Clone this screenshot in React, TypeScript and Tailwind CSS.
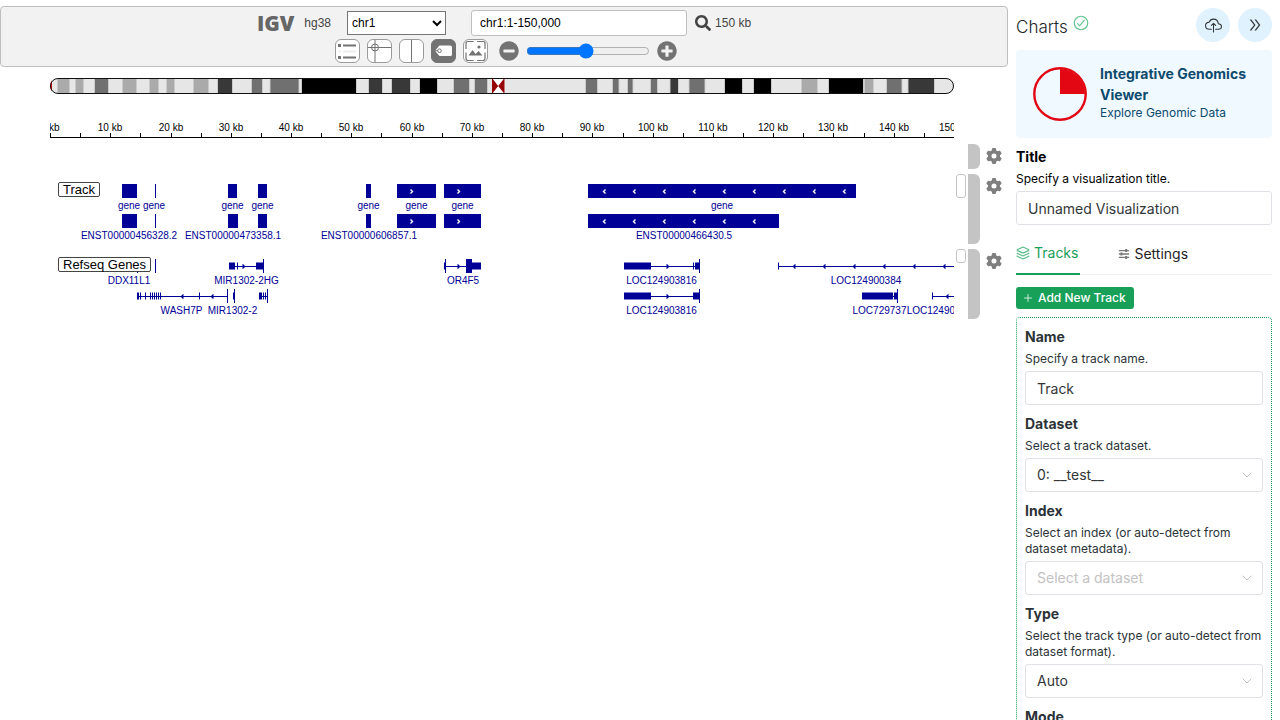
import React, { useState } from "react";
import { FaGear } from "react-icons/fa6";
import { FaSearch, FaMinusCircle, FaPlusCircle } from "react-icons/fa";
import { IoCloudUploadOutline, IoCheckmarkCircleOutline } from "react-icons/io5";
import { AiOutlineDoubleRight } from "react-icons/ai";
import { ChevronDown, Layers, Plus } from "lucide-react";

const BLUE = "#000096";
const KB = 904 / 150;

// Cytobands as [start, end, fill], in pixels from the left end of the ideogram.
const bands: [number, number, string][] = [
  [8, 19, "#aaaaaa"], [26, 33, "#aaaaaa"], [45, 58, "#707070"], [73, 86, "#aaaaaa"],
  [100, 108, "#aaaaaa"], [117, 124, "#aaaaaa"], [144, 158, "#aaaaaa"], [168, 182, "#383838"],
  [202, 212, "#707070"], [220.5, 248.5, "#707070"], [252, 306, "#000000"], [319, 332, "#383838"],
  [342, 360, "#383838"], [370, 387, "#000000"], [404, 419, "#707070"], [425, 437, "#707070"],
  [536, 547, "#707070"], [563, 568.5, "#707070"], [578, 582.5, "#707070"], [601, 607, "#707070"],
  [620.5, 628, "#383838"], [639.5, 654.5, "#707070"], [675, 692, "#000000"], [704, 721, "#000000"],
  [752, 767, "#aaaaaa"], [779, 813, "#000000"], [815, 823, "#aaaaaa"], [837, 851.5, "#707070"],
  [858.5, 884, "#383838"],
];

function Ideogram() {
  return (
    <svg className="block h-4 w-full" aria-label="Chromosome ideogram">
      <defs>
        <clipPath id="chromosome">
          <rect x="0" y="0" width="904" height="16" rx="8" />
        </clipPath>
      </defs>
      <g clipPath="url(#chromosome)">
        <rect width="904" height="16" fill="#e6e6e6" />
        {bands.map(([a, b, fill]) => (
          <g key={a}>
            <rect x={a - 0.8} width={b - a + 1.6} height="16" fill="#c4c4c4" />
            <rect x={a} width={b - a} height="16" fill={fill} />
          </g>
        ))}
        <rect x="442" width="12.5" height="16" fill="#ffffff" />
        <path d="M442 0 L448.2 8 L442 16 Z M454.5 0 L448.2 8 L454.5 16 Z" fill="#960000" />
        <rect width="2" height="16" fill="#e01010" />
      </g>
      <rect x="0.5" y="0.5" width="903" height="15" rx="7.5" fill="none" stroke="#111111" />
    </svg>
  );
}

function Ruler() {
  return (
    <svg className="block h-full w-full font-['Liberation_Sans',Arial,sans-serif] text-[10px]" shapeRendering="crispEdges" aria-label="Ruler">
      <rect x="0" y="18" width="904" height="1" />
      {Array.from({ length: 30 }, (_, i) => (
        <rect key={i} x={Math.round(i * 5 * KB)} y="14" width="1" height="5" />
      ))}
      {Array.from({ length: 16 }, (_, i) => (
        <text key={i} x={Math.round(i * 10 * KB)} y="12" textAnchor="middle">
          {i * 10} kb
        </text>
      ))}
    </svg>
  );
}

type Mark = [number, number, number];

function Arrows({ at, y, dir, color }: { at: number[]; y: number; dir: 1 | -1; color: string }) {
  return (
    <>
      {at.map((x) => (
        <path
          key={x}
          d={`M${x - dir} ${y - 2} L${x + dir} ${y} L${x - dir} ${y + 2}`}
          fill="none"
          stroke={color}
          strokeWidth="1.4"
        />
      ))}
    </>
  );
}

function Marks({ items, y, h }: { items: [number, number][]; y: number; h: number }) {
  return (
    <>
      {items.map(([a, b]) => (
        <rect key={a} x={a} y={y - h / 2} width={b - a} height={h} fill={BLUE} />
      ))}
    </>
  );
}

function Names({ items, y }: { items: [number, string][]; y: number }) {
  return (
    <>
      {items.map(([x, name]) => (
        <text key={x} x={x} y={y} textAnchor="middle" fill={BLUE}>
          {name}
        </text>
      ))}
    </>
  );
}

function range(from: number, step: number, n: number) {
  return Array.from({ length: n }, (_, i) => from + i * step);
}

function AnnotationTrack() {
  return (
    <svg className="block h-full w-full font-['Liberation_Sans',Arial,sans-serif] text-[10px]" aria-label="Track features">
      <Marks y={17} h={14} items={[[72, 87], [105, 106], [178, 187], [208, 217], [316, 321], [347, 386], [394, 431], [538, 806]]} />
      <Arrows y={17.5} dir={1} color="#fff" at={[361.5, 408.5]} />
      <Arrows y={17.5} dir={-1} color="#fff" at={range(554.5, 30, 9)} />
      <Names y={35} items={[[79, "gene"], [104, "gene"], [182.5, "gene"], [212.5, "gene"], [318.5, "gene"], [366.5, "gene"], [412.5, "gene"], [672, "gene"]]} />
      <Marks y={47} h={14} items={[[72, 87], [105, 106], [178, 188], [208, 217], [316, 321], [347, 386], [394, 431], [538, 729]]} />
      <Arrows y={47.5} dir={1} color="#fff" at={[361.5, 408.5]} />
      <Arrows y={47.5} dir={-1} color="#fff" at={range(554.5, 30, 6)} />
      <Names y={65} items={[[79, "ENST00000456328.2"], [183, "ENST00000473358.1"], [319, "ENST00000606857.1"], [634, "ENST00000466430.5"]]} />
    </svg>
  );
}

function RefseqTrack() {
  const introns: Mark[] = [
    [179, 213, 17], [395, 416, 17], [574, 649, 17], [729, 904, 17],
    [87, 177, 47], [209, 217, 47], [574, 649, 47], [812, 848, 47], [882, 904, 47],
  ];
  return (
    <svg className="block h-full w-full font-['Liberation_Sans',Arial,sans-serif] text-[10px]" aria-label="Refseq genes">
      {introns.map(([a, b, y]) => (
        <rect key={`${a}-${y}`} x={a} y={y} width={b - a} height="1" fill={BLUE} shapeRendering="crispEdges" />
      ))}
      <Marks y={17} h={14} items={[[87, 88], [105, 106], [213, 214], [395, 396], [416, 422], [649, 650]]} />
      <Marks y={17} h={7} items={[[179, 185], [187, 188], [206, 213], [394, 395], [422, 431], [574, 601], [643, 644], [645, 649], [728, 729]]} />
      <Arrows y={17.5} dir={1} color={BLUE} at={[193.5, 408.5, 617.5]} />
      <Arrows y={17.5} dir={-1} color={BLUE} at={range(744.5, 30, 6)} />
      <Names y={35} items={[[79, "DDX11L1"], [196.5, "MIR1302-2HG"], [413, "OR4F5"], [611.5, "LOC124903816"], [816, "LOC124900384"]]} />
      <Marks y={47} h={14} items={[[177, 178], [184, 185], [217, 218], [649, 650], [847, 848]]} />
      <Marks
        y={47}
        h={7}
        items={[[87, 89], [90, 91], [95, 96], [100, 101], [102, 103], [104, 105], [106, 107], [108, 109], [110, 111], [149, 150], [183, 184], [209, 212], [213, 214], [215, 216], [574, 601], [643, 649], [812, 843], [844, 847], [882, 883]]}
      />
      <Arrows y={47.5} dir={-1} color={BLUE} at={[132.5, 162.5, 897.5]} />
      <Arrows y={47.5} dir={1} color={BLUE} at={[617.5]} />
      <Names y={65} items={[[131.5, "WASH7P"], [182.5, "MIR1302-2"], [611.5, "LOC124903816"], [829.5, "LOC729737"], [892, "LOC124900385"]]} />
    </svg>
  );
}

function GearButton({ label }: { label: string }) {
  return (
    <button type="button" aria-label={label} className="mx-1.5 mt-1 h-4 w-4 shrink-0 text-[#7f7f7f]">
      <FaGear size={16} />
    </button>
  );
}

function TrackRow({ name, thumb, children }: { name: string; thumb: string; children: React.ReactNode }) {
  return (
    <section className="flex h-[70px] items-start pl-[50px]">
      <div className="relative h-full min-w-0 flex-1 overflow-hidden">
        {children}
        <span className="absolute top-2 left-2 rounded-xs border border-[#444] bg-white px-1 font-['Liberation_Sans',Arial,sans-serif] text-[13px] leading-[13px] text-black">
          {name}
        </span>
      </div>
      <div className="mx-0.5 w-2.5 shrink-0">
        <div className={`${thumb} rounded-[3px] border border-[#c4c4c4] bg-white`} />
      </div>
      <div className="h-full w-3 shrink-0 rounded-r-md bg-[#c4c4c4]" />
      <GearButton label={`${name} settings`} />
    </section>
  );
}

function ToolButton({ label, dark, children }: { label: string; dark?: boolean; children: React.ReactNode }) {
  return (
    <button
      type="button"
      aria-label={label}
      className={
        dark
          ? "h-6 w-[25px] overflow-hidden rounded-md border border-[#737373] bg-[#737373]"
          : "h-6 w-[25px] overflow-hidden rounded-md border border-[#9b9b9b] bg-white"
      }
    >
      <svg viewBox="0 0 23 22" className="block h-full w-full" fill="none" stroke="#737373">
        {children}
      </svg>
    </button>
  );
}

function Toolbar() {
  const [zoom, setZoom] = useState(48);
  return (
    <header className="mt-1.5 flex h-[61px] flex-col items-center gap-[3px] rounded-sm border border-[#bfbfbf] bg-[#f2f2f2] pt-[3px] font-['Liberation_Sans',Arial,sans-serif] text-xs text-[#444]">
      <div className="flex h-[26px] items-center">
        <span className="mr-2.5 font-['Open_Sans',sans-serif] text-[21px] leading-6 font-extrabold text-[#666]">IGV</span>
        <span className="mr-4">hg38</span>
        <select aria-label="Chromosome" defaultValue="chr1" className="mr-[25px] h-6 w-[99px] border border-[#767676] bg-white text-black">
          <option>chr1</option>
          <option>chr2</option>
        </select>
        <input
          aria-label="Locus"
          defaultValue="chr1:1-150,000"
          className="mr-2 h-[26px] w-[216px] rounded-[3px] border border-[#bfbfbf] bg-white px-2 text-black"
        />
        <button type="button" aria-label="Search" className="mr-1">
          <FaSearch size={16} />
        </button>
        <span>150 kb</span>
      </div>
      <div className="flex h-6 items-center gap-[7px] pl-1">
        <ToolButton label="Track selection">
          <path d="M7 5.5H20M7 17.5H20" strokeWidth="2" />
          <path d="M7 11.5H20M2.5 11.5H5" strokeWidth="2" stroke="#eeeeee" />
          <path d="M2 5.5H5M2 17.5H5" strokeWidth="3" />
        </ToolButton>
        <ToolButton label="Crosshairs">
          <path d="M0 7.5H23M7 0V22" />
          <circle cx="7" cy="7.5" r="3.5" />
        </ToolButton>
        <ToolButton label="Center line">
          <path d="M11.5 0V22" />
        </ToolButton>
        <ToolButton label="Track labels" dark>
          <path d="M7.5 5.5H18Q20 5.5 20 7V14.5Q20 16 18 16H7.5L3 10.7Z" fill="#fff" stroke="none" />
          <circle cx="7.5" cy="10.7" r="1.8" />
          <path d="M3 10.7H6" />
        </ToolButton>
        <ToolButton label="Save image">
          <path
            d="M9.500 1.500H4Q2 1.500 2 3.500V9M2 12.500V18Q2 20.500 4 20.500H9.500M13 20.500H19Q21 20.500 21 18V12.500M21 9V3.500Q21 1.500 19 1.500H13"
            strokeWidth="1.200"
          />
          <path d="M4.500 15.500L8.500 10L11.500 14L14.500 11L18.500 15.500Z" fill="#737373" stroke="none" />
          <circle cx="15" cy="7" r="1.600" fill="#737373" stroke="none" />
        </ToolButton>
        <button type="button" aria-label="Zoom out" className="ml-1 text-[#737373]">
          <FaMinusCircle size={20} />
        </button>
        <input
          type="range"
          aria-label="Zoom level"
          min={0}
          max={100}
          value={zoom}
          onChange={(e) => setZoom(Number(e.target.value))}
          className="m-0 w-[124px] accent-[#0075ff]"
        />
        <button type="button" aria-label="Zoom in" className="text-[#737373]">
          <FaPlusCircle size={20} />
        </button>
      </div>
    </header>
  );
}

function Field({
  id,
  label,
  help,
  dark,
  children,
}: {
  id: string;
  label: string;
  help: string;
  dark?: boolean;
  children: React.ReactNode;
}) {
  return (
    <div className={dark ? "flex flex-col gap-1 text-black" : "flex flex-col gap-1 text-[#2c3338]"}>
      <label htmlFor={id} className="text-sm leading-[21px] font-bold">
        {label}
      </label>
      <p className="text-xs leading-4">{help}</p>
      {children}
    </div>
  );
}

const inputClass =
  "h-[34px] w-full appearance-none rounded-[3px] border border-[#e0e0e6] bg-white px-[11px] text-sm text-[#333639]";

function Picker({ id, options, empty }: { id: string; options: string[]; empty?: boolean }) {
  return (
    <div className="relative">
      <select id={id} className={empty ? `${inputClass} text-[#c2c2c2]!` : inputClass}>
        {options.map((o) => (
          <option key={o}>{o}</option>
        ))}
      </select>
      <ChevronDown size={16} strokeWidth={1.5} className="pointer-events-none absolute top-[9px] right-2 text-[#c2c2c2]" />
    </div>
  );
}

function Sidebar() {
  return (
    <aside className="flex w-[264px] shrink-0 flex-col pt-2 pr-2 font-['Inter',sans-serif]">
      <div className="flex h-[34px] shrink-0 items-center">
        <h1 className="mt-1 text-[17px] leading-6 font-light text-[#212529]">Charts</h1>
        <IoCheckmarkCircleOutline size={18} className="mb-1 ml-1 text-[#5fc48d]" />
        <div className="ml-auto flex gap-2 text-[#333639]">
          <button type="button" aria-label="Save" className="flex h-[34px] w-[34px] items-center justify-center rounded-full bg-[#e0f2fe]">
            <IoCloudUploadOutline size={17} />
          </button>
          <button type="button" aria-label="Collapse" className="flex h-[34px] w-[34px] items-center justify-center rounded-full bg-[#e0f2fe]">
            <AiOutlineDoubleRight size={16} />
          </button>
        </div>
      </div>

      <div className="mt-2 flex h-[88px] shrink-0 items-center gap-[13px] rounded-sm bg-[#f0f9ff] pl-[17px] text-[#0c4a6e]">
        <svg viewBox="0 0 54 54" className="h-[54px] w-[54px] shrink-0" aria-hidden="true">
          <circle cx="27" cy="27" r="25.700" fill="none" stroke="#e30613" strokeWidth="2.400" />
          <path d="M27 27V2A25 25 0 0 1 52 27Z" fill="#e30613" />
        </svg>
        <div className="pb-1">
          <h2 className="text-sm leading-[21px] font-bold">Integrative Genomics Viewer</h2>
          <p className="text-xs leading-4">Explore Genomic Data</p>
        </div>
      </div>

      <div className="mt-2">
        <Field id="title" label="Title" help="Specify a visualization title." dark>
          <input id="title" defaultValue="Unnamed Visualization" className={inputClass} />
        </Field>
      </div>

      <div role="tablist" className="mt-2 flex h-[42px] shrink-0 gap-[38px] border-b border-[#efeff5] text-sm">
        <button type="button" role="tab" aria-selected="true" className="-mb-px flex items-center gap-1 border-b-2 border-[#18a058] pr-0.5 text-[#18a058]">
          <Layers size={14} strokeWidth={2} className="opacity-70" />
          Tracks
        </button>
        <button type="button" role="tab" aria-selected="false" className="flex items-center gap-1 text-[#1f2225]">
          <svg viewBox="0 0 14 14" className="h-3 w-3" fill="none" stroke="#7a7a7a" aria-hidden="true">
            <path d="M1 3H13M1 7H13M1 11H13" strokeWidth="1.500" />
            <path d="M9.500 1.200V4.800M4 5.200V8.800M9.500 9.200V12.800" strokeWidth="2.400" />
          </svg>
          Settings
        </button>
      </div>

      <button type="button" className="mt-3 flex h-[22px] shrink-0 items-center gap-1 self-start rounded-[3px] bg-[#18a058] px-1.5 pr-2 text-xs font-medium text-white">
        <Plus size={12} strokeWidth={1.5} />
        Add New Track
      </button>

      <div className="mt-2 flex flex-col gap-2 rounded-sm border border-dotted border-[#18a058] p-2">
        <Field id="name" label="Name" help="Specify a track name.">
          <input id="name" defaultValue="Track" className={inputClass} />
        </Field>
        <Field id="dataset" label="Dataset" help="Select a track dataset.">
          <Picker id="dataset" options={["0: __test__"]} />
        </Field>
        <Field id="index" label="Index" help="Select an index (or auto-detect from dataset metadata).">
          <Picker id="index" options={["Select a dataset"]} empty />
        </Field>
        <Field id="type" label="Type" help="Select the track type (or auto-detect from dataset format).">
          <Picker id="type" options={["Auto", "Annotation", "Alignment", "Variant"]} />
        </Field>
        <Field id="mode" label="Mode" help="Select a display mode.">
          <Picker id="mode" options={["Expanded", "Collapsed"]} />
        </Field>
      </div>
    </aside>
  );
}

export default function App() {
  return (
    <div className="flex h-screen gap-2 overflow-hidden bg-white">
      <main className="min-w-0 flex-1">
        <Toolbar />
        <div className="mt-[11px] pr-[54px] pl-[50px]">
          <Ideogram />
        </div>
        <div className="mt-[25px] flex flex-col gap-[5px]">
          <section className="flex h-[50px] items-end pl-[50px]">
            <div className="mr-3.5 h-full min-w-0 flex-1">
              <Ruler />
            </div>
            <div className="h-[25px] w-3 shrink-0 rounded-r-md bg-[#c4c4c4]" />
            <div className="h-[25px]">
              <GearButton label="Ruler settings" />
            </div>
          </section>
          <TrackRow name="Track" thumb="h-6">
            <AnnotationTrack />
          </TrackRow>
          <TrackRow name="Refseq Genes" thumb="h-3.5">
            <RefseqTrack />
          </TrackRow>
        </div>
      </main>
      <Sidebar />
    </div>
  );
}
